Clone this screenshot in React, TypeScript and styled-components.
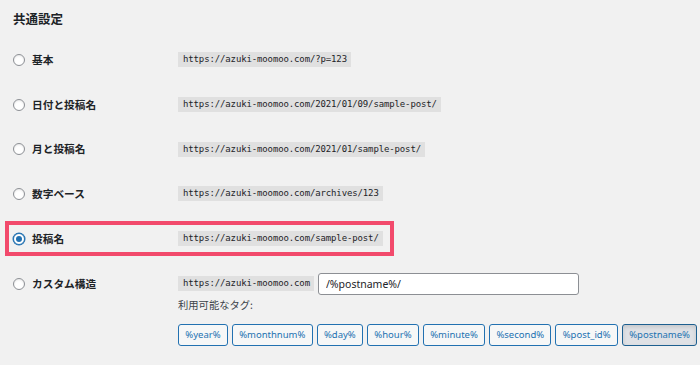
import React from "react";
import styled, { createGlobalStyle, css } from "styled-components";

const Global = createGlobalStyle`
  html, body { margin: 0; padding: 0; background: #f1f1f1; }
  body { font-family: "Noto Sans CJK JP", "Noto Sans", sans-serif; color: #1d2327; }
`;

const Page = styled.div`
  width: 700px;
  height: 365px;
  box-sizing: border-box;
  padding: 10px 0 0 13px;
  overflow: hidden;
`;

const Title = styled.h2`
  margin: 0 0 9.5px 0;
  font-size: 12.5px;
  line-height: 18px;
  font-weight: 700;
`;

const Row = styled.div<{ $highlight?: boolean; $top?: boolean }>`
  position: relative;
  display: grid;
  grid-template-columns: 165px 1fr;
  align-items: ${(p) => (p.$top ? "start" : "center")};
  height: ${(p) => (p.$top ? "auto" : "44.7px")};
  padding-top: ${(p) => (p.$top ? "12px" : "0")};
  ${(p) =>
    p.$highlight &&
    css`
      &::after {
        content: "";
        position: absolute;
        left: -8px;
        top: 5px;
        width: 389px;
        height: 35px;
        box-sizing: border-box;
        border: 4px solid #f24a6c;
        pointer-events: none;
      }
    `}
`;

const LabelCell = styled.label<{ $top?: boolean }>`
  display: flex;
  align-items: center;
  gap: 7px;
  font-size: 10.7px;
  font-weight: 700;
  line-height: 14px;
  ${(p) => p.$top && css`height: 22px;`}
`;

const Radio = styled.span<{ $checked?: boolean }>`
  width: 12px;
  height: 12px;
  box-sizing: border-box;
  border-radius: 50%;
  background: #fff;
  border: 1px solid ${(p) => (p.$checked ? "#2271b1" : "#8c8f94")};
  box-shadow: ${(p) => (p.$checked ? "0 0 0 0.5px #2271b1" : "inset 0 1px 2px rgba(0,0,0,0.1)")};
  display: flex;
  align-items: center;
  justify-content: center;
  flex: none;
  &::before {
    content: "";
    display: ${(p) => (p.$checked ? "block" : "none")};
    width: 6px;
    height: 6px;
    border-radius: 50%;
    background: #2271b1;
  }
`;

const Code = styled.code`
  display: inline-block;
  justify-self: start;
  font-family: "DejaVu Sans Mono", monospace;
  font-size: 9px;
  letter-spacing: -0.13px;
  line-height: 15px;
  padding: 0 4px 0 5px;
  background: rgba(0, 0, 0, 0.07);
  color: #1d2327;
`;

const Custom = styled.div`
  display: flex;
  flex-direction: column;
`;

const Line = styled.div`
  display: flex;
  align-items: center;
  gap: 4px;
  height: 22px;
`;

const Input = styled.input`
  width: 261px;
  height: 22px;
  box-sizing: border-box;
  border: 1px solid #8c8f94;
  border-radius: 3px;
  background: #fff;
  padding: 0 7px;
  font-family: "Noto Sans", sans-serif;
  font-size: 10.5px;
  color: #1d2327;
  outline: none;
`;

const TagsLabel = styled.div`
  margin-top: 3px;
  font-size: 10.3px;
  line-height: 14px;
  color: #3c434a;
`;

const Tags = styled.div`
  display: flex;
  gap: 4px;
  margin-top: 12px;
`;

const Tag = styled.button<{ $pressed?: boolean }>`
  height: 22px;
  box-sizing: border-box;
  padding: 0 6.3px;
  border-radius: 3px;
  border: 1px solid ${(p) => (p.$pressed ? "#1d5f8f" : "#2271b1")};
  background: ${(p) => (p.$pressed ? "#dfe1e5" : "#f6f7f7")};
  box-shadow: ${(p) => (p.$pressed ? "inset 0 2px 4px rgba(0,0,0,0.12)" : "none")};
  color: #2271b1;
  font-family: "Noto Sans", sans-serif;
  font-size: 9.5px;
  line-height: 20px;
  cursor: pointer;
`;

const options = [
  { label: "基本", code: "https://azuki-moomoo.com/?p=123" },
  { label: "日付と投稿名", code: "https://azuki-moomoo.com/2021/01/09/sample-post/" },
  { label: "月と投稿名", code: "https://azuki-moomoo.com/2021/01/sample-post/" },
  { label: "数字ベース", code: "https://azuki-moomoo.com/archives/123" },
  { label: "投稿名", code: "https://azuki-moomoo.com/sample-post/", checked: true },
];

const tags = ["%year%", "%monthnum%", "%day%", "%hour%", "%minute%", "%second%", "%post_id%", "%postname%"];

export default function App() {
  return (
    <>
      <Global />
      <Page>
        <Title>共通設定</Title>
        {options.map((o) => (
          <Row key={o.label} $highlight={o.checked}>
            <LabelCell>
              <Radio $checked={o.checked} />
              {o.label}
            </LabelCell>
            <Code>{o.code}</Code>
          </Row>
        ))}
        <Row $top>
          <LabelCell $top>
            <Radio />
            カスタム構造
          </LabelCell>
          <Custom>
            <Line>
              <Code>https://azuki-moomoo.com</Code>
              <Input defaultValue="/%postname%/" />
            </Line>
            <TagsLabel>利用可能なタグ:</TagsLabel>
            <Tags>
              {tags.map((t) => (
                <Tag key={t} $pressed={t === "%postname%"}>
                  {t}
                </Tag>
              ))}
            </Tags>
          </Custom>
        </Row>
      </Page>
    </>
  );
}
